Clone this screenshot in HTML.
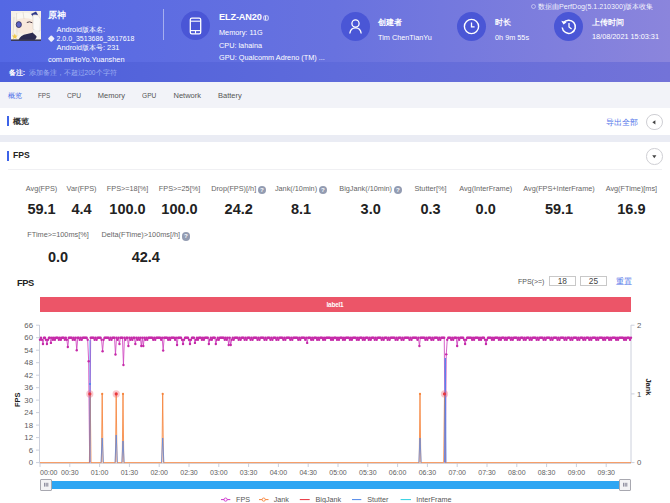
<!DOCTYPE html>
<html><head><meta charset="utf-8">
<style>
*{box-sizing:border-box}
html,body{margin:0;padding:0}
body{width:670px;height:503px;overflow:hidden;position:relative;background:#ffffff;font-family:"Liberation Sans",sans-serif;color:#333}
.a{position:absolute;white-space:nowrap}
.w{color:#fff}
.circ{position:absolute;width:29px;height:29px;border-radius:50%;background:#4a56d6}
.circ svg{position:absolute;left:0;top:0}
.lb{width:120px;text-align:center;font-size:7.3px;line-height:10px;color:#666}
.vl{width:120px;text-align:center;font-size:14.5px;line-height:18px;font-weight:bold;color:#222}
.q{display:inline-block;width:8.5px;height:8.5px;border-radius:50%;background:#939cb2;color:#fff;font-size:6.2px;line-height:8.5px;text-align:center;font-weight:bold;margin-left:1.5px;vertical-align:-1.2px}
.ylab{font-family:"Liberation Sans",sans-serif;font-size:7.8px;fill:#606060}
.xlab{font-family:"Liberation Sans",sans-serif;font-size:7px;fill:#606060}
.lg{top:494.5px;font-size:7.2px;line-height:10px;color:#555}
</style></head><body>
<!-- header -->
<div class="a" style="left:0;top:0;width:670px;height:62px;background:linear-gradient(90deg,#5468e4 0%,#6872df 50%,#8b85dc 100%)"></div>
<div class="a" style="left:0;top:62px;width:670px;height:19.5px;background:linear-gradient(90deg,#4c5fdb 0%,#5f6bdb 50%,#7373d8 100%)"></div>
<!-- avatar -->
<div class="a" style="left:11px;top:10.6px;width:30px;height:30px;overflow:hidden">
<svg width="30" height="30" viewBox="0 0 30 30">
<rect width="30" height="30" fill="#f4eee2"/>
<path d="M0 0 H30 V30 H0Z" fill="#f6f1e8"/>
<path d="M4 4 Q12 0 20 3 L22 10 Q14 6 6 10 Z" fill="#fbf8f2"/>
<path d="M5 9 Q14 5 22 9 L24 21 Q15 25 6 21 Z" fill="#f8e9dc"/>
<path d="M5.5 2 L6 24 M12 1 L13 8 M3 6 L2 26" stroke="#dcd6cc" stroke-width="0.7" fill="none"/>
<ellipse cx="7.8" cy="13.6" rx="2.6" ry="3" fill="#5b62c4" stroke="#2d2c55" stroke-width="0.8"/>
<path d="M15.8 11.5 Q18.6 10 21.4 11.8" stroke="#4a3a45" stroke-width="1" fill="none"/>
<path d="M20 3 L25 0.5 L27 4 L22 5.5Z" fill="#2f3a8a"/>
<path d="M22 4 Q28 3 29.5 8 L29 20 Q25 22 22 18 Z" fill="#fbfaf7" stroke="#cfc8c2" stroke-width="0.5"/>
<path d="M7 30 Q9 24 16 23 Q22 22 25 20 L27 23 Q25 28 23 30 Z" fill="#2b2a4f"/>
<path d="M22 19 Q27 18 29 23 L27 28 Q25 24 22 22Z" fill="#f3f1ef"/>
<path d="M3.8 22.5 L4.7 24.4 L6.7 24.6 L5.2 25.9 L5.6 27.9 L3.8 26.9 L2 27.9 L2.4 25.9 L0.9 24.6 L2.9 24.4Z" fill="#f0c94e"/>
<rect x="0" y="28.4" width="30" height="1.6" fill="#3a3a55"/>
</svg></div>
<div class="a w" style="left:48.2px;top:9.3px;font-size:8.5px;line-height:12px;font-weight:bold">原神</div>
<div class="a w" style="left:56.5px;top:25px;font-size:7.4px;line-height:10px">Android版本名:</div>
<div class="a" style="left:48.6px;top:36.1px;width:4.6px;height:4.6px;background:#eef0fa;transform:rotate(45deg);border-radius:1px"></div><div class="a w" style="left:56.5px;top:33.7px;font-size:7.0px;line-height:10px">2.0.0_3513686_3617618</div>
<div class="a w" style="left:56.5px;top:43px;font-size:7.4px;line-height:10px">Android版本号: 231</div>
<div class="a w" style="left:48px;top:54.5px;font-size:7.4px;line-height:10px">com.miHoYo.Yuanshen</div>
<div class="a" style="left:163px;top:9px;width:1px;height:31px;background:rgba(255,255,255,.45)"></div>

<!-- device -->
<div class="circ" style="left:181.2px;top:11.4px">
<svg width="29" height="29" viewBox="0 0 29 29"><rect x="9.3" y="7.2" width="10.4" height="15.6" rx="1.6" fill="none" stroke="#fff" stroke-width="1.3"/><line x1="9.3" y1="10.2" x2="19.7" y2="10.2" stroke="#fff" stroke-width="1.1"/><line x1="9.3" y1="19.6" x2="19.7" y2="19.6" stroke="#fff" stroke-width="1.1"/><line x1="14.5" y1="19.6" x2="14.5" y2="22.6" stroke="#fff" stroke-width="1.1"/></svg></div>
<div class="a w" style="left:219px;top:11.2px;font-size:9.2px;line-height:12px;font-weight:bold;letter-spacing:-0.15px">ELZ-AN20</div><div class="a" style="left:262.8px;top:14.9px;width:6px;height:6px;border-radius:50%;border:0.8px solid rgba(255,255,255,.55);background:rgba(255,255,255,.12)"></div><div class="a" style="left:265.4px;top:16.2px;width:0.9px;height:3.4px;background:rgba(255,255,255,.8)"></div>
<div class="a w" style="left:219px;top:27.5px;font-size:7.3px;line-height:10px">Memory: 11G</div>
<div class="a w" style="left:219px;top:40.5px;font-size:7.3px;line-height:10px">CPU: lahaina</div>
<div class="a w" style="left:219px;top:52.5px;font-size:7.3px;line-height:10px">GPU: Qualcomm Adreno (TM) ...</div>

<!-- creator -->
<div class="circ" style="left:340.5px;top:11.5px">
<svg width="29" height="29" viewBox="0 0 29 29"><circle cx="14.5" cy="11.5" r="3.6" fill="none" stroke="#fff" stroke-width="1.3"/><path d="M8.8 21.5 Q9.5 15.8 14.5 15.8 Q19.5 15.8 20.2 21.5" fill="none" stroke="#fff" stroke-width="1.3"/></svg></div>
<div class="a w" style="left:378px;top:16.5px;font-size:8.1px;line-height:12px;font-weight:bold">创建者</div>
<div class="a w" style="left:378px;top:32.5px;font-size:7.3px;line-height:10px">Tim ChenTianYu</div>

<!-- duration -->
<div class="circ" style="left:457px;top:11.5px">
<svg width="29" height="29" viewBox="0 0 29 29"><circle cx="14.5" cy="14.5" r="7.1" fill="none" stroke="#fff" stroke-width="1.4"/><path d="M14.5 10.5 V14.8 H17.6" fill="none" stroke="#fff" stroke-width="1.3"/></svg></div>
<div class="a w" style="left:494.8px;top:16.5px;font-size:8.1px;line-height:12px;font-weight:bold">时长</div>
<div class="a w" style="left:495px;top:33px;font-size:7.3px;line-height:10px">0h 9m 55s</div>

<!-- upload -->
<div class="circ" style="left:554px;top:11.5px">
<svg width="29" height="29" viewBox="0 0 29 29"><path d="M9.2 11.2 A6.6 6.6 0 1 1 8.2 15.5" fill="none" stroke="#fff" stroke-width="1.5"/><path d="M7.2 8.8 L9.6 12.4 L12.6 10.3 Z" fill="#fff"/><path d="M15 11 V15 L17.6 17" fill="none" stroke="#fff" stroke-width="1.3"/></svg></div>
<div class="a w" style="left:592.4px;top:17px;font-size:8.1px;line-height:12px;font-weight:bold">上传时间</div>
<div class="a w" style="left:592px;top:32px;font-size:7.3px;line-height:10px">18/08/2021 15:03:31</div>

<div class="a" style="left:530.5px;top:4.3px;width:5px;height:5px;border:0.7px solid rgba(255,255,255,.45);border-radius:50%"></div><div class="a" style="left:538px;top:2.3px;font-size:7.1px;line-height:10px;color:rgba(255,255,255,.92)">数据由PerfDog(5.1.210300)版本收集</div>

<!-- remark band -->
<div class="a w" style="left:8.8px;top:67.2px;font-size:7px;line-height:11px;font-weight:bold">备注:</div>
<div class="a" style="left:28.5px;top:66.5px;font-size:6.6px;line-height:11px;color:#9fb0f2">添加备注，不超过200个字符</div>

<!-- tabs -->
<div class="a" style="left:0;top:81.5px;width:670px;height:26px;background:#f2f3f8"></div>
<div class="a" style="left:8px;top:90.8px;font-size:6.8px;line-height:10px;color:#4a6ee8">概览</div>
<div class="a" style="left:38.4px;top:90.5px;font-size:7.5px;line-height:10px;color:#555;transform-origin:0 50%;transform:scaleX(.84)">FPS</div>
<div class="a" style="left:67px;top:90.5px;font-size:7.5px;line-height:10px;color:#555;transform-origin:0 50%;transform:scaleX(.89)">CPU</div>
<div class="a" style="left:97.8px;top:90.5px;font-size:7.5px;line-height:10px;color:#555">Memory</div>
<div class="a" style="left:142px;top:90.5px;font-size:7.5px;line-height:10px;color:#555;transform-origin:0 50%;transform:scaleX(.88)">GPU</div>
<div class="a" style="left:173.5px;top:90.5px;font-size:7.5px;line-height:10px;color:#555">Network</div>
<div class="a" style="left:218px;top:90.5px;font-size:7.5px;line-height:10px;color:#555">Battery</div>

<!-- overview section -->
<div class="a" style="left:0;top:107.5px;width:670px;height:27px;background:#fff"></div>
<div class="a" style="left:7.4px;top:115.8px;width:1.8px;height:9.8px;background:#3d63e8"></div>
<div class="a" style="left:12.5px;top:115.5px;font-size:8.2px;line-height:11px;color:#333;font-weight:bold">概览</div>
<div class="a" style="left:605.8px;top:116.6px;font-size:7.5px;line-height:11px;color:#5577ea">导出全部</div>
<div class="a" style="left:646px;top:113.5px;width:16.5px;height:16.5px;border-radius:50%;border:1px solid #cfcfd4;background:#fff"></div>
<svg class="a" style="left:646px;top:113.5px" width="17" height="17"><path d="M6.3 8.3 L9.4 6.2 V10.4 Z" fill="#444"/></svg>

<div class="a" style="left:0;top:134.5px;width:670px;height:7.5px;background:#eaecf4"></div>

<!-- FPS section -->
<div class="a" style="left:7.4px;top:151px;width:1.8px;height:10.4px;background:#3d63e8"></div>
<div class="a" style="left:13px;top:150.3px;font-size:8.6px;line-height:11px;font-weight:bold;color:#222">FPS</div>
<div class="a" style="left:646px;top:148px;width:16.5px;height:16.5px;border-radius:50%;border:1px solid #cfcfd4;background:#fff"></div>
<svg class="a" style="left:646px;top:148px" width="17" height="17"><path d="M6.2 7.2 L10.4 7.2 L8.3 10.2 Z" fill="#444"/></svg>
<div class="a" style="left:8px;top:169.3px;width:654px;height:1px;background:#f0f0f3"></div>

<!-- stats -->
<div class="a lb" style="left:-18.5px;top:183.5px">Avg(FPS)</div>
<div class="a vl" style="left:-18.5px;top:200.2px">59.1</div>
<div class="a lb" style="left:21.5px;top:183.5px">Var(FPS)</div>
<div class="a vl" style="left:21.5px;top:200.2px">4.4</div>
<div class="a lb" style="left:67.5px;top:183.5px">FPS&gt;=18[%]</div>
<div class="a vl" style="left:67.5px;top:200.2px">100.0</div>
<div class="a lb" style="left:119.5px;top:183.5px">FPS&gt;=25[%]</div>
<div class="a vl" style="left:119.5px;top:200.2px">100.0</div>
<div class="a lb" style="left:178.7px;top:183.5px">Drop(FPS)[/h]<span class="q">?</span></div>
<div class="a vl" style="left:178.7px;top:200.2px">24.2</div>
<div class="a lb" style="left:241px;top:183.5px">Jank(/10min)<span class="q">?</span></div>
<div class="a vl" style="left:241px;top:200.2px">8.1</div>
<div class="a lb" style="left:310.7px;top:183.5px">BigJank(/10min)<span class="q">?</span></div>
<div class="a vl" style="left:310.7px;top:200.2px">3.0</div>
<div class="a lb" style="left:370.5px;top:183.5px">Stutter[%]</div>
<div class="a vl" style="left:370.5px;top:200.2px">0.3</div>
<div class="a lb" style="left:425.7px;top:183.5px">Avg(InterFrame)</div>
<div class="a vl" style="left:425.7px;top:200.2px">0.0</div>
<div class="a lb" style="left:499px;top:183.5px">Avg(FPS+InterFrame)</div>
<div class="a vl" style="left:499px;top:200.2px">59.1</div>
<div class="a lb" style="left:571.4px;top:183.5px">Avg(FTime)[ms]</div>
<div class="a vl" style="left:571.4px;top:200.2px">16.9</div>
<div class="a lb" style="left:-2px;top:230.2px">FTime&gt;=100ms[%]</div>
<div class="a vl" style="left:-2px;top:247.5px">0.0</div>
<div class="a lb" style="left:85.80000000000001px;top:230.2px">Delta(FTime)&gt;100ms[/h]<span class="q">?</span></div>
<div class="a vl" style="left:85.80000000000001px;top:247.5px">42.4</div>
<!-- chart -->
<div class="a" style="left:17px;top:277.6px;font-size:9.3px;line-height:11px;font-weight:bold;color:#222;letter-spacing:-0.4px">FPS</div>
<div class="a" style="left:518px;top:276.5px;font-size:7px;line-height:10px;color:#555">FPS(&gt;=)</div>
<div class="a" style="left:549px;top:276.3px;width:26.6px;height:9.6px;border:0.8px solid #c8c8c8;font-size:8.3px;line-height:8.6px;text-align:center;color:#444">18</div>
<div class="a" style="left:580.2px;top:276.3px;width:26.4px;height:9.6px;border:0.8px solid #c8c8c8;font-size:8.3px;line-height:8.6px;text-align:center;color:#444">25</div>
<div class="a" style="left:615.5px;top:276.8px;font-size:7.5px;line-height:10px;color:#4a6ee8">重置</div>
<div class="a" style="left:39.8px;top:296.8px;width:590.9px;height:15.1px;background:#ec5568"></div>
<div class="a" style="left:300px;top:299.6px;width:70px;text-align:center;font-size:6.4px;line-height:10px;color:#fff;font-weight:bold;letter-spacing:-0.2px">label1</div>
<div class="a" style="left:10px;top:395px;width:14px;height:10px;font-size:7.5px;line-height:10px;font-weight:bold;color:#222;transform:translateX(0.5px) rotate(-90deg);text-align:center">FPS</div>
<div class="a" style="left:638px;top:382px;width:20px;height:10px;font-size:7.5px;line-height:10px;font-weight:bold;color:#222;transform:rotate(90deg);text-align:center">Jank</div>
<svg class="a" style="left:0;top:0" width="670" height="503" viewBox="0 0 670 503"><line x1="39.5" y1="325" x2="39.5" y2="463" stroke="#ccd0dc" stroke-width="1"/>
<line x1="631" y1="325" x2="631" y2="463" stroke="#ccd0dc" stroke-width="1"/>
<line x1="36" y1="462.6" x2="39.5" y2="462.6" stroke="#ccd0dc" stroke-width="1"/>
<text x="33" y="465.3" text-anchor="end" class="ylab">0</text>
<line x1="36" y1="450.1" x2="39.5" y2="450.1" stroke="#ccd0dc" stroke-width="1"/>
<text x="33" y="452.8" text-anchor="end" class="ylab">6</text>
<line x1="36" y1="437.6" x2="39.5" y2="437.6" stroke="#ccd0dc" stroke-width="1"/>
<text x="33" y="440.3" text-anchor="end" class="ylab">12</text>
<line x1="36" y1="425.1" x2="39.5" y2="425.1" stroke="#ccd0dc" stroke-width="1"/>
<text x="33" y="427.8" text-anchor="end" class="ylab">18</text>
<line x1="36" y1="412.6" x2="39.5" y2="412.6" stroke="#ccd0dc" stroke-width="1"/>
<text x="33" y="415.3" text-anchor="end" class="ylab">24</text>
<line x1="36" y1="400.1" x2="39.5" y2="400.1" stroke="#ccd0dc" stroke-width="1"/>
<text x="33" y="402.8" text-anchor="end" class="ylab">30</text>
<line x1="36" y1="387.7" x2="39.5" y2="387.7" stroke="#ccd0dc" stroke-width="1"/>
<text x="33" y="390.4" text-anchor="end" class="ylab">36</text>
<line x1="36" y1="375.2" x2="39.5" y2="375.2" stroke="#ccd0dc" stroke-width="1"/>
<text x="33" y="377.9" text-anchor="end" class="ylab">42</text>
<line x1="36" y1="362.7" x2="39.5" y2="362.7" stroke="#ccd0dc" stroke-width="1"/>
<text x="33" y="365.4" text-anchor="end" class="ylab">48</text>
<line x1="36" y1="350.2" x2="39.5" y2="350.2" stroke="#ccd0dc" stroke-width="1"/>
<text x="33" y="352.9" text-anchor="end" class="ylab">54</text>
<line x1="36" y1="337.7" x2="39.5" y2="337.7" stroke="#ccd0dc" stroke-width="1"/>
<text x="33" y="340.4" text-anchor="end" class="ylab">60</text>
<line x1="36" y1="325.2" x2="39.5" y2="325.2" stroke="#ccd0dc" stroke-width="1"/>
<text x="33" y="327.9" text-anchor="end" class="ylab">66</text>
<line x1="631" y1="462.6" x2="634.5" y2="462.6" stroke="#ccd0dc" stroke-width="1"/>
<text x="637" y="465.3" class="ylab">0</text>
<line x1="631" y1="393.9" x2="634.5" y2="393.9" stroke="#ccd0dc" stroke-width="1"/>
<text x="637" y="396.6" class="ylab">1</text>
<line x1="631" y1="325.2" x2="634.5" y2="325.2" stroke="#ccd0dc" stroke-width="1"/>
<text x="637" y="327.9" class="ylab">2</text>
<line x1="39.5" y1="463.3" x2="631" y2="463.3" stroke="#ccd0dc" stroke-width="1"/>
<line x1="40.0" y1="463" x2="40.0" y2="467" stroke="#ccd0dc" stroke-width="1"/>
<text x="40.0" y="475" class="xlab">00:00</text>
<line x1="69.8" y1="463" x2="69.8" y2="467" stroke="#ccd0dc" stroke-width="1"/>
<text x="69.8" y="475" text-anchor="middle" class="xlab">00:30</text>
<line x1="99.6" y1="463" x2="99.6" y2="467" stroke="#ccd0dc" stroke-width="1"/>
<text x="99.6" y="475" text-anchor="middle" class="xlab">01:00</text>
<line x1="129.4" y1="463" x2="129.4" y2="467" stroke="#ccd0dc" stroke-width="1"/>
<text x="129.4" y="475" text-anchor="middle" class="xlab">01:30</text>
<line x1="159.2" y1="463" x2="159.2" y2="467" stroke="#ccd0dc" stroke-width="1"/>
<text x="159.2" y="475" text-anchor="middle" class="xlab">02:00</text>
<line x1="189.0" y1="463" x2="189.0" y2="467" stroke="#ccd0dc" stroke-width="1"/>
<text x="189.0" y="475" text-anchor="middle" class="xlab">02:30</text>
<line x1="218.8" y1="463" x2="218.8" y2="467" stroke="#ccd0dc" stroke-width="1"/>
<text x="218.8" y="475" text-anchor="middle" class="xlab">03:00</text>
<line x1="248.6" y1="463" x2="248.6" y2="467" stroke="#ccd0dc" stroke-width="1"/>
<text x="248.6" y="475" text-anchor="middle" class="xlab">03:30</text>
<line x1="278.4" y1="463" x2="278.4" y2="467" stroke="#ccd0dc" stroke-width="1"/>
<text x="278.4" y="475" text-anchor="middle" class="xlab">04:00</text>
<line x1="308.2" y1="463" x2="308.2" y2="467" stroke="#ccd0dc" stroke-width="1"/>
<text x="308.2" y="475" text-anchor="middle" class="xlab">04:30</text>
<line x1="338.0" y1="463" x2="338.0" y2="467" stroke="#ccd0dc" stroke-width="1"/>
<text x="338.0" y="475" text-anchor="middle" class="xlab">05:00</text>
<line x1="367.8" y1="463" x2="367.8" y2="467" stroke="#ccd0dc" stroke-width="1"/>
<text x="367.8" y="475" text-anchor="middle" class="xlab">05:30</text>
<line x1="397.6" y1="463" x2="397.6" y2="467" stroke="#ccd0dc" stroke-width="1"/>
<text x="397.6" y="475" text-anchor="middle" class="xlab">06:00</text>
<line x1="427.4" y1="463" x2="427.4" y2="467" stroke="#ccd0dc" stroke-width="1"/>
<text x="427.4" y="475" text-anchor="middle" class="xlab">06:30</text>
<line x1="457.2" y1="463" x2="457.2" y2="467" stroke="#ccd0dc" stroke-width="1"/>
<text x="457.2" y="475" text-anchor="middle" class="xlab">07:00</text>
<line x1="487.0" y1="463" x2="487.0" y2="467" stroke="#ccd0dc" stroke-width="1"/>
<text x="487.0" y="475" text-anchor="middle" class="xlab">07:30</text>
<line x1="516.8" y1="463" x2="516.8" y2="467" stroke="#ccd0dc" stroke-width="1"/>
<text x="516.8" y="475" text-anchor="middle" class="xlab">08:00</text>
<line x1="546.6" y1="463" x2="546.6" y2="467" stroke="#ccd0dc" stroke-width="1"/>
<text x="546.6" y="475" text-anchor="middle" class="xlab">08:30</text>
<line x1="576.4" y1="463" x2="576.4" y2="467" stroke="#ccd0dc" stroke-width="1"/>
<text x="576.4" y="475" text-anchor="middle" class="xlab">09:00</text>
<line x1="606.2" y1="463" x2="606.2" y2="467" stroke="#ccd0dc" stroke-width="1"/>
<text x="606.2" y="475" text-anchor="middle" class="xlab">09:30</text>
<polyline points="40.00,339.77 40.99,337.69 41.99,339.77 42.98,343.94 43.97,337.69 44.97,337.69 45.96,339.77 46.95,343.94 47.95,339.77 48.94,337.69 49.93,337.69 50.93,342.90 51.92,337.69 52.91,339.77 53.91,337.69 54.90,339.77 55.89,337.69 56.89,337.69 57.88,337.69 58.87,339.77 59.87,337.69 60.86,339.77 61.85,337.69 62.85,337.69 63.84,337.69 64.83,339.77 65.83,337.69 66.82,339.77 67.81,347.06 68.81,337.69 69.80,337.69 70.79,337.69 71.78,337.69 72.78,339.77 73.77,337.69 74.76,339.77 75.76,337.69 76.75,350.18 77.74,337.69 78.74,337.69 79.73,339.77 80.72,337.69 81.72,339.77 82.71,337.69 83.70,337.69 84.70,337.69 85.69,337.69 86.68,337.69 87.68,339.77 88.67,361.22 89.66,462.60 90.66,337.69 91.65,337.69 92.64,337.69 93.64,337.69 94.63,339.77 95.62,337.69 96.62,339.77 97.61,337.69 98.60,337.69 99.60,337.69 100.59,337.69 101.58,339.77 102.58,351.22 103.57,339.77 104.56,337.69 105.56,337.69 106.55,337.69 107.54,337.69 108.54,337.69 109.53,339.77 110.52,337.69 111.52,339.77 112.51,337.69 113.50,337.69 114.50,337.69 115.49,354.55 116.48,337.69 117.48,339.77 118.47,337.69 119.46,343.94 120.46,337.69 121.45,337.69 122.44,337.69 123.44,364.96 124.43,337.69 125.42,339.77 126.42,337.69 127.41,337.69 128.40,346.02 129.39,337.69 130.39,339.77 131.38,337.69 132.37,339.77 133.37,337.69 134.36,337.69 135.35,343.94 136.35,337.69 137.34,339.77 138.33,337.69 139.33,339.77 140.32,337.69 141.31,346.02 142.31,337.69 143.30,346.02 144.29,337.69 145.29,339.77 146.28,337.69 147.27,339.77 148.27,337.69 149.26,337.69 150.25,337.69 151.25,337.69 152.24,337.69 153.23,339.77 154.23,337.69 155.22,339.77 156.21,337.69 157.21,337.69 158.20,337.69 159.19,337.69 160.19,337.69 161.18,339.77 162.17,337.69 163.17,350.60 164.16,337.69 165.15,337.69 166.15,337.69 167.14,337.69 168.13,339.77 169.13,337.69 170.12,339.77 171.11,337.69 172.11,337.69 173.10,337.69 174.09,337.69 175.09,339.77 176.08,337.69 177.07,344.98 178.07,337.69 179.06,337.69 180.05,337.69 181.05,337.69 182.04,339.77 183.03,343.94 184.03,339.77 185.02,337.69 186.01,337.69 187.01,337.69 188.00,337.69 188.99,339.77 189.98,343.94 190.98,339.77 191.97,337.69 192.96,337.69 193.96,337.69 194.95,342.90 195.94,339.77 196.94,337.69 197.93,339.77 198.92,337.69 199.92,337.69 200.91,337.69 201.90,339.77 202.90,337.69 203.89,339.77 204.88,337.69 205.88,337.69 206.87,337.69 207.86,337.69 208.86,343.94 209.85,339.77 210.84,337.69 211.84,339.77 212.83,337.69 213.82,337.69 214.82,337.69 215.81,343.94 216.80,339.77 217.80,337.69 218.79,339.77 219.78,337.69 220.78,337.69 221.77,337.69 222.76,337.69 223.76,337.69 224.75,339.77 225.74,337.69 226.74,339.77 227.73,337.69 228.72,344.98 229.72,337.69 230.71,344.98 231.70,339.77 232.70,337.69 233.69,339.77 234.68,337.69 235.68,337.69 236.67,337.69 237.66,337.69 238.66,339.77 239.65,337.69 240.64,339.77 241.64,337.69 242.63,337.69 243.62,337.69 244.62,339.77 245.61,337.69 246.60,339.77 247.59,337.69 248.59,337.69 249.58,337.69 250.57,339.77 251.57,337.69 252.56,339.77 253.55,337.69 254.55,337.69 255.54,337.69 256.53,337.69 257.53,339.77 258.52,337.69 259.51,339.77 260.51,337.69 261.50,337.69 262.49,337.69 263.49,337.69 264.48,339.77 265.47,337.69 266.47,339.77 267.46,337.69 268.45,337.69 269.45,337.69 270.44,339.77 271.43,337.69 272.43,339.77 273.42,337.69 274.41,337.69 275.41,337.69 276.40,339.77 277.39,337.69 278.39,339.77 279.38,337.69 280.37,337.69 281.37,337.69 282.36,337.69 283.35,339.77 284.35,337.69 285.34,339.77 286.33,337.69 287.33,337.69 288.32,337.69 289.31,337.69 290.31,339.77 291.30,337.69 292.29,339.77 293.29,337.69 294.28,337.69 295.27,337.69 296.27,337.69 297.26,337.69 298.25,339.77 299.25,337.69 300.24,339.77 301.23,337.69 302.23,337.69 303.22,337.69 304.21,337.69 305.21,339.77 306.20,337.69 307.19,342.90 308.18,337.69 309.18,337.69 310.17,337.69 311.16,339.77 312.16,337.69 313.15,339.77 314.14,337.69 315.14,337.69 316.13,337.69 317.12,339.77 318.12,337.69 319.11,339.77 320.10,337.69 321.10,337.69 322.09,337.69 323.08,339.77 324.08,337.69 325.07,339.77 326.06,337.69 327.06,337.69 328.05,337.69 329.04,337.69 330.04,337.69 331.03,339.77 332.02,337.69 333.02,339.77 334.01,337.69 335.00,337.69 336.00,337.69 336.99,339.77 337.98,337.69 338.98,339.77 339.97,337.69 340.96,337.69 341.96,337.69 342.95,339.77 343.94,337.69 344.94,339.77 345.93,337.69 346.92,337.69 347.92,337.69 348.91,337.69 349.90,339.77 350.90,337.69 351.89,339.77 352.88,337.69 353.88,337.69 354.87,337.69 355.86,337.69 356.86,339.77 357.85,337.69 358.84,339.77 359.84,337.69 360.83,337.69 361.82,337.69 362.82,339.77 363.81,337.69 364.80,339.77 365.79,337.69 366.79,337.69 367.78,337.69 368.77,339.77 369.77,337.69 370.76,339.77 371.75,337.69 372.75,337.69 373.74,337.69 374.73,339.77 375.73,337.69 376.72,339.77 377.71,337.69 378.71,337.69 379.70,337.69 380.69,337.69 381.69,339.77 382.68,337.69 383.67,339.77 384.67,337.69 385.66,337.69 386.65,337.69 387.65,339.77 388.64,337.69 389.63,339.77 390.63,337.69 391.62,337.69 392.61,337.69 393.61,337.69 394.60,337.69 395.59,339.77 396.59,337.69 397.58,339.77 398.57,337.69 399.57,337.69 400.56,337.69 401.55,339.77 402.55,337.69 403.54,339.77 404.53,337.69 405.53,337.69 406.52,337.69 407.51,337.69 408.51,337.69 409.50,339.77 410.49,337.69 411.49,339.77 412.48,337.69 413.47,337.69 414.47,337.69 415.46,337.69 416.45,337.69 417.45,339.77 418.44,337.69 419.43,346.02 420.43,337.69 421.42,337.69 422.41,337.69 423.41,337.69 424.40,337.69 425.39,339.77 426.38,337.69 427.38,339.77 428.37,337.69 429.36,337.69 430.36,337.69 431.35,339.77 432.34,337.69 433.34,339.77 434.33,337.69 435.32,337.69 436.32,337.69 437.31,337.69 438.30,339.77 439.30,337.69 440.29,339.77 441.28,337.69 442.28,337.69 443.27,337.69 444.26,337.69 445.26,462.60 446.25,354.35 447.24,339.77 448.24,337.69 449.23,337.69 450.22,337.69 451.22,339.77 452.21,337.69 453.20,339.77 454.20,337.69 455.19,337.69 456.18,337.69 457.18,346.02 458.17,337.69 459.16,339.77 460.16,337.69 461.15,337.69 462.14,337.69 463.14,337.69 464.13,339.77 465.12,343.94 466.12,339.77 467.11,337.69 468.10,337.69 469.10,337.69 470.09,337.69 471.08,337.69 472.08,339.77 473.07,337.69 474.06,339.77 475.06,337.69 476.05,337.69 477.04,337.69 478.04,337.69 479.03,339.77 480.02,337.69 481.02,339.77 482.01,337.69 483.00,337.69 483.99,337.69 484.99,339.77 485.98,343.94 486.97,339.77 487.97,337.69 488.96,337.69 489.95,337.69 490.95,337.69 491.94,339.77 492.93,337.69 493.93,339.77 494.92,337.69 495.91,337.69 496.91,337.69 497.90,337.69 498.89,339.77 499.89,337.69 500.88,339.77 501.87,337.69 502.87,337.69 503.86,337.69 504.85,339.77 505.85,337.69 506.84,339.77 507.83,337.69 508.83,337.69 509.82,337.69 510.81,339.77 511.81,337.69 512.80,339.77 513.79,337.69 514.79,337.69 515.78,337.69 516.77,337.69 517.77,339.77 518.76,337.69 519.75,339.77 520.75,337.69 521.74,337.69 522.73,337.69 523.73,339.77 524.72,337.69 525.71,339.77 526.71,337.69 527.70,337.69 528.69,337.69 529.69,339.77 530.68,337.69 531.67,339.77 532.67,337.69 533.66,337.69 534.65,337.69 535.65,337.69 536.64,339.77 537.63,337.69 538.63,339.77 539.62,337.69 540.61,337.69 541.61,337.69 542.60,337.69 543.59,339.77 544.58,337.69 545.58,339.77 546.57,337.69 547.56,337.69 548.56,337.69 549.55,337.69 550.54,339.77 551.54,337.69 552.53,339.77 553.52,337.69 554.52,337.69 555.51,337.69 556.50,337.69 557.50,339.77 558.49,337.69 559.48,339.77 560.48,337.69 561.47,337.69 562.46,337.69 563.46,337.69 564.45,339.77 565.44,337.69 566.44,339.77 567.43,337.69 568.42,337.69 569.42,337.69 570.41,339.77 571.40,337.69 572.40,339.77 573.39,337.69 574.38,337.69 575.38,337.69 576.37,337.69 577.36,339.77 578.36,337.69 579.35,339.77 580.34,337.69 581.34,337.69 582.33,337.69 583.32,339.77 584.32,337.69 585.31,339.77 586.30,337.69 587.30,337.69 588.29,337.69 589.28,339.77 590.28,337.69 591.27,339.77 592.26,337.69 593.26,337.69 594.25,337.69 595.24,337.69 596.24,339.77 597.23,337.69 598.22,339.77 599.22,337.69 600.21,337.69 601.20,337.69 602.19,337.69 603.19,339.77 604.18,337.69 605.17,339.77 606.17,337.69 607.16,337.69 608.15,337.69 609.15,339.77 610.14,337.69 611.13,339.77 612.13,337.69 613.12,337.69 614.11,337.69 615.11,337.69 616.10,339.77 617.09,337.69 618.09,339.77 619.08,337.69 620.07,337.69 621.07,337.69 622.06,337.69 623.05,337.69 624.05,339.77 625.04,337.69 626.03,339.77 627.03,337.69 628.02,337.69 629.01,337.69 630.01,339.77 631.00,337.69" fill="none" stroke="#cf45c0" stroke-width="1" stroke-opacity="0.85"/>
<polyline points="40.0,462.6 89.40,462.6 90.20,393.90 91.00,462.6 101.40,462.6 102.20,393.90 103.00,462.6 115.40,462.6 116.20,393.90 117.00,462.6 122.20,462.6 123.00,393.90 123.80,462.6 161.90,462.6 162.70,393.90 163.50,462.6 419.20,462.6 420.00,393.90 420.80,462.6 443.70,462.6 444.50,393.90 445.30,462.6 631.0,462.6" fill="none" stroke="#f5843c" stroke-width="0.85"/>
<circle cx="90.20" cy="393.90" r="1.1" fill="#f5843c"/>
<circle cx="102.20" cy="393.90" r="1.1" fill="#f5843c"/>
<circle cx="116.20" cy="393.90" r="1.1" fill="#f5843c"/>
<circle cx="123.00" cy="393.90" r="1.1" fill="#f5843c"/>
<circle cx="162.70" cy="393.90" r="1.1" fill="#f5843c"/>
<circle cx="420.00" cy="393.90" r="1.1" fill="#f5843c"/>
<circle cx="444.50" cy="393.90" r="1.1" fill="#f5843c"/>
<path d="M101.00 462.6 L102.20 438 L103.40 462.6" fill="none" stroke="#4a86ee" stroke-width="0.9" opacity="0.8"/>
<path d="M115.00 462.6 L116.20 435 L117.40 462.6" fill="none" stroke="#4a86ee" stroke-width="0.9" opacity="0.8"/>
<path d="M121.80 462.6 L123.00 441 L124.20 462.6" fill="none" stroke="#4a86ee" stroke-width="0.9" opacity="0.8"/>
<path d="M161.50 462.6 L162.70 438 L163.90 462.6" fill="none" stroke="#4a86ee" stroke-width="0.9" opacity="0.8"/>
<path d="M418.80 462.6 L420.00 438 L421.20 462.6" fill="none" stroke="#4a86ee" stroke-width="0.9" opacity="0.8"/>
<line x1="90" y1="340" x2="90" y2="462.6" stroke="#4a86ee" stroke-width="0.9"/>
<circle cx="90" cy="384" r="1" fill="#4a86ee"/>
<path d="M444.6 462.6 L445.3 358 L446 462.6" fill="none" stroke="#4a86ee" stroke-width="0.9"/>
<circle cx="40.00" cy="339.77" r="1.2" fill="#c52aa8"/>
<circle cx="40.99" cy="337.69" r="1.2" fill="#c52aa8"/>
<circle cx="41.99" cy="339.77" r="1.2" fill="#c52aa8"/>
<circle cx="42.98" cy="343.94" r="1.2" fill="#c52aa8"/>
<circle cx="43.97" cy="337.69" r="1.2" fill="#c52aa8"/>
<circle cx="44.97" cy="337.69" r="1.2" fill="#c52aa8"/>
<circle cx="45.96" cy="339.77" r="1.2" fill="#c52aa8"/>
<circle cx="46.95" cy="343.94" r="1.2" fill="#c52aa8"/>
<circle cx="47.95" cy="339.77" r="1.2" fill="#c52aa8"/>
<circle cx="48.94" cy="337.69" r="1.2" fill="#c52aa8"/>
<circle cx="49.93" cy="337.69" r="1.2" fill="#c52aa8"/>
<circle cx="50.93" cy="342.90" r="1.2" fill="#c52aa8"/>
<circle cx="51.92" cy="337.69" r="1.2" fill="#c52aa8"/>
<circle cx="52.91" cy="339.77" r="1.2" fill="#c52aa8"/>
<circle cx="53.91" cy="337.69" r="1.2" fill="#c52aa8"/>
<circle cx="54.90" cy="339.77" r="1.2" fill="#c52aa8"/>
<circle cx="55.89" cy="337.69" r="1.2" fill="#c52aa8"/>
<circle cx="56.89" cy="337.69" r="1.2" fill="#c52aa8"/>
<circle cx="57.88" cy="337.69" r="1.2" fill="#c52aa8"/>
<circle cx="58.87" cy="339.77" r="1.2" fill="#c52aa8"/>
<circle cx="59.87" cy="337.69" r="1.2" fill="#c52aa8"/>
<circle cx="60.86" cy="339.77" r="1.2" fill="#c52aa8"/>
<circle cx="61.85" cy="337.69" r="1.2" fill="#c52aa8"/>
<circle cx="62.85" cy="337.69" r="1.2" fill="#c52aa8"/>
<circle cx="63.84" cy="337.69" r="1.2" fill="#c52aa8"/>
<circle cx="64.83" cy="339.77" r="1.2" fill="#c52aa8"/>
<circle cx="65.83" cy="337.69" r="1.2" fill="#c52aa8"/>
<circle cx="66.82" cy="339.77" r="1.2" fill="#c52aa8"/>
<circle cx="67.81" cy="347.06" r="1.2" fill="#c52aa8"/>
<circle cx="68.81" cy="337.69" r="1.2" fill="#c52aa8"/>
<circle cx="69.80" cy="337.69" r="1.2" fill="#c52aa8"/>
<circle cx="70.79" cy="337.69" r="1.2" fill="#c52aa8"/>
<circle cx="71.78" cy="337.69" r="1.2" fill="#c52aa8"/>
<circle cx="72.78" cy="339.77" r="1.2" fill="#c52aa8"/>
<circle cx="73.77" cy="337.69" r="1.2" fill="#c52aa8"/>
<circle cx="74.76" cy="339.77" r="1.2" fill="#c52aa8"/>
<circle cx="75.76" cy="337.69" r="1.2" fill="#c52aa8"/>
<circle cx="76.75" cy="350.18" r="1.2" fill="#c52aa8"/>
<circle cx="77.74" cy="337.69" r="1.2" fill="#c52aa8"/>
<circle cx="78.74" cy="337.69" r="1.2" fill="#c52aa8"/>
<circle cx="79.73" cy="339.77" r="1.2" fill="#c52aa8"/>
<circle cx="80.72" cy="337.69" r="1.2" fill="#c52aa8"/>
<circle cx="81.72" cy="339.77" r="1.2" fill="#c52aa8"/>
<circle cx="82.71" cy="337.69" r="1.2" fill="#c52aa8"/>
<circle cx="83.70" cy="337.69" r="1.2" fill="#c52aa8"/>
<circle cx="84.70" cy="337.69" r="1.2" fill="#c52aa8"/>
<circle cx="85.69" cy="337.69" r="1.2" fill="#c52aa8"/>
<circle cx="86.68" cy="337.69" r="1.2" fill="#c52aa8"/>
<circle cx="87.68" cy="339.77" r="1.2" fill="#c52aa8"/>
<circle cx="88.67" cy="361.22" r="1.2" fill="#c52aa8"/>
<circle cx="90.66" cy="337.69" r="1.2" fill="#c52aa8"/>
<circle cx="91.65" cy="337.69" r="1.2" fill="#c52aa8"/>
<circle cx="92.64" cy="337.69" r="1.2" fill="#c52aa8"/>
<circle cx="93.64" cy="337.69" r="1.2" fill="#c52aa8"/>
<circle cx="94.63" cy="339.77" r="1.2" fill="#c52aa8"/>
<circle cx="95.62" cy="337.69" r="1.2" fill="#c52aa8"/>
<circle cx="96.62" cy="339.77" r="1.2" fill="#c52aa8"/>
<circle cx="97.61" cy="337.69" r="1.2" fill="#c52aa8"/>
<circle cx="98.60" cy="337.69" r="1.2" fill="#c52aa8"/>
<circle cx="99.60" cy="337.69" r="1.2" fill="#c52aa8"/>
<circle cx="100.59" cy="337.69" r="1.2" fill="#c52aa8"/>
<circle cx="101.58" cy="339.77" r="1.2" fill="#c52aa8"/>
<circle cx="102.58" cy="351.22" r="1.2" fill="#c52aa8"/>
<circle cx="103.57" cy="339.77" r="1.2" fill="#c52aa8"/>
<circle cx="104.56" cy="337.69" r="1.2" fill="#c52aa8"/>
<circle cx="105.56" cy="337.69" r="1.2" fill="#c52aa8"/>
<circle cx="106.55" cy="337.69" r="1.2" fill="#c52aa8"/>
<circle cx="107.54" cy="337.69" r="1.2" fill="#c52aa8"/>
<circle cx="108.54" cy="337.69" r="1.2" fill="#c52aa8"/>
<circle cx="109.53" cy="339.77" r="1.2" fill="#c52aa8"/>
<circle cx="110.52" cy="337.69" r="1.2" fill="#c52aa8"/>
<circle cx="111.52" cy="339.77" r="1.2" fill="#c52aa8"/>
<circle cx="112.51" cy="337.69" r="1.2" fill="#c52aa8"/>
<circle cx="113.50" cy="337.69" r="1.2" fill="#c52aa8"/>
<circle cx="114.50" cy="337.69" r="1.2" fill="#c52aa8"/>
<circle cx="115.49" cy="354.55" r="1.2" fill="#c52aa8"/>
<circle cx="116.48" cy="337.69" r="1.2" fill="#c52aa8"/>
<circle cx="117.48" cy="339.77" r="1.2" fill="#c52aa8"/>
<circle cx="118.47" cy="337.69" r="1.2" fill="#c52aa8"/>
<circle cx="119.46" cy="343.94" r="1.2" fill="#c52aa8"/>
<circle cx="120.46" cy="337.69" r="1.2" fill="#c52aa8"/>
<circle cx="121.45" cy="337.69" r="1.2" fill="#c52aa8"/>
<circle cx="122.44" cy="337.69" r="1.2" fill="#c52aa8"/>
<circle cx="123.44" cy="364.96" r="1.2" fill="#c52aa8"/>
<circle cx="124.43" cy="337.69" r="1.2" fill="#c52aa8"/>
<circle cx="125.42" cy="339.77" r="1.2" fill="#c52aa8"/>
<circle cx="126.42" cy="337.69" r="1.2" fill="#c52aa8"/>
<circle cx="127.41" cy="337.69" r="1.2" fill="#c52aa8"/>
<circle cx="128.40" cy="346.02" r="1.2" fill="#c52aa8"/>
<circle cx="129.39" cy="337.69" r="1.2" fill="#c52aa8"/>
<circle cx="130.39" cy="339.77" r="1.2" fill="#c52aa8"/>
<circle cx="131.38" cy="337.69" r="1.2" fill="#c52aa8"/>
<circle cx="132.37" cy="339.77" r="1.2" fill="#c52aa8"/>
<circle cx="133.37" cy="337.69" r="1.2" fill="#c52aa8"/>
<circle cx="134.36" cy="337.69" r="1.2" fill="#c52aa8"/>
<circle cx="135.35" cy="343.94" r="1.2" fill="#c52aa8"/>
<circle cx="136.35" cy="337.69" r="1.2" fill="#c52aa8"/>
<circle cx="137.34" cy="339.77" r="1.2" fill="#c52aa8"/>
<circle cx="138.33" cy="337.69" r="1.2" fill="#c52aa8"/>
<circle cx="139.33" cy="339.77" r="1.2" fill="#c52aa8"/>
<circle cx="140.32" cy="337.69" r="1.2" fill="#c52aa8"/>
<circle cx="141.31" cy="346.02" r="1.2" fill="#c52aa8"/>
<circle cx="142.31" cy="337.69" r="1.2" fill="#c52aa8"/>
<circle cx="143.30" cy="346.02" r="1.2" fill="#c52aa8"/>
<circle cx="144.29" cy="337.69" r="1.2" fill="#c52aa8"/>
<circle cx="145.29" cy="339.77" r="1.2" fill="#c52aa8"/>
<circle cx="146.28" cy="337.69" r="1.2" fill="#c52aa8"/>
<circle cx="147.27" cy="339.77" r="1.2" fill="#c52aa8"/>
<circle cx="148.27" cy="337.69" r="1.2" fill="#c52aa8"/>
<circle cx="149.26" cy="337.69" r="1.2" fill="#c52aa8"/>
<circle cx="150.25" cy="337.69" r="1.2" fill="#c52aa8"/>
<circle cx="151.25" cy="337.69" r="1.2" fill="#c52aa8"/>
<circle cx="152.24" cy="337.69" r="1.2" fill="#c52aa8"/>
<circle cx="153.23" cy="339.77" r="1.2" fill="#c52aa8"/>
<circle cx="154.23" cy="337.69" r="1.2" fill="#c52aa8"/>
<circle cx="155.22" cy="339.77" r="1.2" fill="#c52aa8"/>
<circle cx="156.21" cy="337.69" r="1.2" fill="#c52aa8"/>
<circle cx="157.21" cy="337.69" r="1.2" fill="#c52aa8"/>
<circle cx="158.20" cy="337.69" r="1.2" fill="#c52aa8"/>
<circle cx="159.19" cy="337.69" r="1.2" fill="#c52aa8"/>
<circle cx="160.19" cy="337.69" r="1.2" fill="#c52aa8"/>
<circle cx="161.18" cy="339.77" r="1.2" fill="#c52aa8"/>
<circle cx="162.17" cy="337.69" r="1.2" fill="#c52aa8"/>
<circle cx="163.17" cy="350.60" r="1.2" fill="#c52aa8"/>
<circle cx="164.16" cy="337.69" r="1.2" fill="#c52aa8"/>
<circle cx="165.15" cy="337.69" r="1.2" fill="#c52aa8"/>
<circle cx="166.15" cy="337.69" r="1.2" fill="#c52aa8"/>
<circle cx="167.14" cy="337.69" r="1.2" fill="#c52aa8"/>
<circle cx="168.13" cy="339.77" r="1.2" fill="#c52aa8"/>
<circle cx="169.13" cy="337.69" r="1.2" fill="#c52aa8"/>
<circle cx="170.12" cy="339.77" r="1.2" fill="#c52aa8"/>
<circle cx="171.11" cy="337.69" r="1.2" fill="#c52aa8"/>
<circle cx="172.11" cy="337.69" r="1.2" fill="#c52aa8"/>
<circle cx="173.10" cy="337.69" r="1.2" fill="#c52aa8"/>
<circle cx="174.09" cy="337.69" r="1.2" fill="#c52aa8"/>
<circle cx="175.09" cy="339.77" r="1.2" fill="#c52aa8"/>
<circle cx="176.08" cy="337.69" r="1.2" fill="#c52aa8"/>
<circle cx="177.07" cy="344.98" r="1.2" fill="#c52aa8"/>
<circle cx="178.07" cy="337.69" r="1.2" fill="#c52aa8"/>
<circle cx="179.06" cy="337.69" r="1.2" fill="#c52aa8"/>
<circle cx="180.05" cy="337.69" r="1.2" fill="#c52aa8"/>
<circle cx="181.05" cy="337.69" r="1.2" fill="#c52aa8"/>
<circle cx="182.04" cy="339.77" r="1.2" fill="#c52aa8"/>
<circle cx="183.03" cy="343.94" r="1.2" fill="#c52aa8"/>
<circle cx="184.03" cy="339.77" r="1.2" fill="#c52aa8"/>
<circle cx="185.02" cy="337.69" r="1.2" fill="#c52aa8"/>
<circle cx="186.01" cy="337.69" r="1.2" fill="#c52aa8"/>
<circle cx="187.01" cy="337.69" r="1.2" fill="#c52aa8"/>
<circle cx="188.00" cy="337.69" r="1.2" fill="#c52aa8"/>
<circle cx="188.99" cy="339.77" r="1.2" fill="#c52aa8"/>
<circle cx="189.98" cy="343.94" r="1.2" fill="#c52aa8"/>
<circle cx="190.98" cy="339.77" r="1.2" fill="#c52aa8"/>
<circle cx="191.97" cy="337.69" r="1.2" fill="#c52aa8"/>
<circle cx="192.96" cy="337.69" r="1.2" fill="#c52aa8"/>
<circle cx="193.96" cy="337.69" r="1.2" fill="#c52aa8"/>
<circle cx="194.95" cy="342.90" r="1.2" fill="#c52aa8"/>
<circle cx="195.94" cy="339.77" r="1.2" fill="#c52aa8"/>
<circle cx="196.94" cy="337.69" r="1.2" fill="#c52aa8"/>
<circle cx="197.93" cy="339.77" r="1.2" fill="#c52aa8"/>
<circle cx="198.92" cy="337.69" r="1.2" fill="#c52aa8"/>
<circle cx="199.92" cy="337.69" r="1.2" fill="#c52aa8"/>
<circle cx="200.91" cy="337.69" r="1.2" fill="#c52aa8"/>
<circle cx="201.90" cy="339.77" r="1.2" fill="#c52aa8"/>
<circle cx="202.90" cy="337.69" r="1.2" fill="#c52aa8"/>
<circle cx="203.89" cy="339.77" r="1.2" fill="#c52aa8"/>
<circle cx="204.88" cy="337.69" r="1.2" fill="#c52aa8"/>
<circle cx="205.88" cy="337.69" r="1.2" fill="#c52aa8"/>
<circle cx="206.87" cy="337.69" r="1.2" fill="#c52aa8"/>
<circle cx="207.86" cy="337.69" r="1.2" fill="#c52aa8"/>
<circle cx="208.86" cy="343.94" r="1.2" fill="#c52aa8"/>
<circle cx="209.85" cy="339.77" r="1.2" fill="#c52aa8"/>
<circle cx="210.84" cy="337.69" r="1.2" fill="#c52aa8"/>
<circle cx="211.84" cy="339.77" r="1.2" fill="#c52aa8"/>
<circle cx="212.83" cy="337.69" r="1.2" fill="#c52aa8"/>
<circle cx="213.82" cy="337.69" r="1.2" fill="#c52aa8"/>
<circle cx="214.82" cy="337.69" r="1.2" fill="#c52aa8"/>
<circle cx="215.81" cy="343.94" r="1.2" fill="#c52aa8"/>
<circle cx="216.80" cy="339.77" r="1.2" fill="#c52aa8"/>
<circle cx="217.80" cy="337.69" r="1.2" fill="#c52aa8"/>
<circle cx="218.79" cy="339.77" r="1.2" fill="#c52aa8"/>
<circle cx="219.78" cy="337.69" r="1.2" fill="#c52aa8"/>
<circle cx="220.78" cy="337.69" r="1.2" fill="#c52aa8"/>
<circle cx="221.77" cy="337.69" r="1.2" fill="#c52aa8"/>
<circle cx="222.76" cy="337.69" r="1.2" fill="#c52aa8"/>
<circle cx="223.76" cy="337.69" r="1.2" fill="#c52aa8"/>
<circle cx="224.75" cy="339.77" r="1.2" fill="#c52aa8"/>
<circle cx="225.74" cy="337.69" r="1.2" fill="#c52aa8"/>
<circle cx="226.74" cy="339.77" r="1.2" fill="#c52aa8"/>
<circle cx="227.73" cy="337.69" r="1.2" fill="#c52aa8"/>
<circle cx="228.72" cy="344.98" r="1.2" fill="#c52aa8"/>
<circle cx="229.72" cy="337.69" r="1.2" fill="#c52aa8"/>
<circle cx="230.71" cy="344.98" r="1.2" fill="#c52aa8"/>
<circle cx="231.70" cy="339.77" r="1.2" fill="#c52aa8"/>
<circle cx="232.70" cy="337.69" r="1.2" fill="#c52aa8"/>
<circle cx="233.69" cy="339.77" r="1.2" fill="#c52aa8"/>
<circle cx="234.68" cy="337.69" r="1.2" fill="#c52aa8"/>
<circle cx="235.68" cy="337.69" r="1.2" fill="#c52aa8"/>
<circle cx="236.67" cy="337.69" r="1.2" fill="#c52aa8"/>
<circle cx="237.66" cy="337.69" r="1.2" fill="#c52aa8"/>
<circle cx="238.66" cy="339.77" r="1.2" fill="#c52aa8"/>
<circle cx="239.65" cy="337.69" r="1.2" fill="#c52aa8"/>
<circle cx="240.64" cy="339.77" r="1.2" fill="#c52aa8"/>
<circle cx="241.64" cy="337.69" r="1.2" fill="#c52aa8"/>
<circle cx="242.63" cy="337.69" r="1.2" fill="#c52aa8"/>
<circle cx="243.62" cy="337.69" r="1.2" fill="#c52aa8"/>
<circle cx="244.62" cy="339.77" r="1.2" fill="#c52aa8"/>
<circle cx="245.61" cy="337.69" r="1.2" fill="#c52aa8"/>
<circle cx="246.60" cy="339.77" r="1.2" fill="#c52aa8"/>
<circle cx="247.59" cy="337.69" r="1.2" fill="#c52aa8"/>
<circle cx="248.59" cy="337.69" r="1.2" fill="#c52aa8"/>
<circle cx="249.58" cy="337.69" r="1.2" fill="#c52aa8"/>
<circle cx="250.57" cy="339.77" r="1.2" fill="#c52aa8"/>
<circle cx="251.57" cy="337.69" r="1.2" fill="#c52aa8"/>
<circle cx="252.56" cy="339.77" r="1.2" fill="#c52aa8"/>
<circle cx="253.55" cy="337.69" r="1.2" fill="#c52aa8"/>
<circle cx="254.55" cy="337.69" r="1.2" fill="#c52aa8"/>
<circle cx="255.54" cy="337.69" r="1.2" fill="#c52aa8"/>
<circle cx="256.53" cy="337.69" r="1.2" fill="#c52aa8"/>
<circle cx="257.53" cy="339.77" r="1.2" fill="#c52aa8"/>
<circle cx="258.52" cy="337.69" r="1.2" fill="#c52aa8"/>
<circle cx="259.51" cy="339.77" r="1.2" fill="#c52aa8"/>
<circle cx="260.51" cy="337.69" r="1.2" fill="#c52aa8"/>
<circle cx="261.50" cy="337.69" r="1.2" fill="#c52aa8"/>
<circle cx="262.49" cy="337.69" r="1.2" fill="#c52aa8"/>
<circle cx="263.49" cy="337.69" r="1.2" fill="#c52aa8"/>
<circle cx="264.48" cy="339.77" r="1.2" fill="#c52aa8"/>
<circle cx="265.47" cy="337.69" r="1.2" fill="#c52aa8"/>
<circle cx="266.47" cy="339.77" r="1.2" fill="#c52aa8"/>
<circle cx="267.46" cy="337.69" r="1.2" fill="#c52aa8"/>
<circle cx="268.45" cy="337.69" r="1.2" fill="#c52aa8"/>
<circle cx="269.45" cy="337.69" r="1.2" fill="#c52aa8"/>
<circle cx="270.44" cy="339.77" r="1.2" fill="#c52aa8"/>
<circle cx="271.43" cy="337.69" r="1.2" fill="#c52aa8"/>
<circle cx="272.43" cy="339.77" r="1.2" fill="#c52aa8"/>
<circle cx="273.42" cy="337.69" r="1.2" fill="#c52aa8"/>
<circle cx="274.41" cy="337.69" r="1.2" fill="#c52aa8"/>
<circle cx="275.41" cy="337.69" r="1.2" fill="#c52aa8"/>
<circle cx="276.40" cy="339.77" r="1.2" fill="#c52aa8"/>
<circle cx="277.39" cy="337.69" r="1.2" fill="#c52aa8"/>
<circle cx="278.39" cy="339.77" r="1.2" fill="#c52aa8"/>
<circle cx="279.38" cy="337.69" r="1.2" fill="#c52aa8"/>
<circle cx="280.37" cy="337.69" r="1.2" fill="#c52aa8"/>
<circle cx="281.37" cy="337.69" r="1.2" fill="#c52aa8"/>
<circle cx="282.36" cy="337.69" r="1.2" fill="#c52aa8"/>
<circle cx="283.35" cy="339.77" r="1.2" fill="#c52aa8"/>
<circle cx="284.35" cy="337.69" r="1.2" fill="#c52aa8"/>
<circle cx="285.34" cy="339.77" r="1.2" fill="#c52aa8"/>
<circle cx="286.33" cy="337.69" r="1.2" fill="#c52aa8"/>
<circle cx="287.33" cy="337.69" r="1.2" fill="#c52aa8"/>
<circle cx="288.32" cy="337.69" r="1.2" fill="#c52aa8"/>
<circle cx="289.31" cy="337.69" r="1.2" fill="#c52aa8"/>
<circle cx="290.31" cy="339.77" r="1.2" fill="#c52aa8"/>
<circle cx="291.30" cy="337.69" r="1.2" fill="#c52aa8"/>
<circle cx="292.29" cy="339.77" r="1.2" fill="#c52aa8"/>
<circle cx="293.29" cy="337.69" r="1.2" fill="#c52aa8"/>
<circle cx="294.28" cy="337.69" r="1.2" fill="#c52aa8"/>
<circle cx="295.27" cy="337.69" r="1.2" fill="#c52aa8"/>
<circle cx="296.27" cy="337.69" r="1.2" fill="#c52aa8"/>
<circle cx="297.26" cy="337.69" r="1.2" fill="#c52aa8"/>
<circle cx="298.25" cy="339.77" r="1.2" fill="#c52aa8"/>
<circle cx="299.25" cy="337.69" r="1.2" fill="#c52aa8"/>
<circle cx="300.24" cy="339.77" r="1.2" fill="#c52aa8"/>
<circle cx="301.23" cy="337.69" r="1.2" fill="#c52aa8"/>
<circle cx="302.23" cy="337.69" r="1.2" fill="#c52aa8"/>
<circle cx="303.22" cy="337.69" r="1.2" fill="#c52aa8"/>
<circle cx="304.21" cy="337.69" r="1.2" fill="#c52aa8"/>
<circle cx="305.21" cy="339.77" r="1.2" fill="#c52aa8"/>
<circle cx="306.20" cy="337.69" r="1.2" fill="#c52aa8"/>
<circle cx="307.19" cy="342.90" r="1.2" fill="#c52aa8"/>
<circle cx="308.18" cy="337.69" r="1.2" fill="#c52aa8"/>
<circle cx="309.18" cy="337.69" r="1.2" fill="#c52aa8"/>
<circle cx="310.17" cy="337.69" r="1.2" fill="#c52aa8"/>
<circle cx="311.16" cy="339.77" r="1.2" fill="#c52aa8"/>
<circle cx="312.16" cy="337.69" r="1.2" fill="#c52aa8"/>
<circle cx="313.15" cy="339.77" r="1.2" fill="#c52aa8"/>
<circle cx="314.14" cy="337.69" r="1.2" fill="#c52aa8"/>
<circle cx="315.14" cy="337.69" r="1.2" fill="#c52aa8"/>
<circle cx="316.13" cy="337.69" r="1.2" fill="#c52aa8"/>
<circle cx="317.12" cy="339.77" r="1.2" fill="#c52aa8"/>
<circle cx="318.12" cy="337.69" r="1.2" fill="#c52aa8"/>
<circle cx="319.11" cy="339.77" r="1.2" fill="#c52aa8"/>
<circle cx="320.10" cy="337.69" r="1.2" fill="#c52aa8"/>
<circle cx="321.10" cy="337.69" r="1.2" fill="#c52aa8"/>
<circle cx="322.09" cy="337.69" r="1.2" fill="#c52aa8"/>
<circle cx="323.08" cy="339.77" r="1.2" fill="#c52aa8"/>
<circle cx="324.08" cy="337.69" r="1.2" fill="#c52aa8"/>
<circle cx="325.07" cy="339.77" r="1.2" fill="#c52aa8"/>
<circle cx="326.06" cy="337.69" r="1.2" fill="#c52aa8"/>
<circle cx="327.06" cy="337.69" r="1.2" fill="#c52aa8"/>
<circle cx="328.05" cy="337.69" r="1.2" fill="#c52aa8"/>
<circle cx="329.04" cy="337.69" r="1.2" fill="#c52aa8"/>
<circle cx="330.04" cy="337.69" r="1.2" fill="#c52aa8"/>
<circle cx="331.03" cy="339.77" r="1.2" fill="#c52aa8"/>
<circle cx="332.02" cy="337.69" r="1.2" fill="#c52aa8"/>
<circle cx="333.02" cy="339.77" r="1.2" fill="#c52aa8"/>
<circle cx="334.01" cy="337.69" r="1.2" fill="#c52aa8"/>
<circle cx="335.00" cy="337.69" r="1.2" fill="#c52aa8"/>
<circle cx="336.00" cy="337.69" r="1.2" fill="#c52aa8"/>
<circle cx="336.99" cy="339.77" r="1.2" fill="#c52aa8"/>
<circle cx="337.98" cy="337.69" r="1.2" fill="#c52aa8"/>
<circle cx="338.98" cy="339.77" r="1.2" fill="#c52aa8"/>
<circle cx="339.97" cy="337.69" r="1.2" fill="#c52aa8"/>
<circle cx="340.96" cy="337.69" r="1.2" fill="#c52aa8"/>
<circle cx="341.96" cy="337.69" r="1.2" fill="#c52aa8"/>
<circle cx="342.95" cy="339.77" r="1.2" fill="#c52aa8"/>
<circle cx="343.94" cy="337.69" r="1.2" fill="#c52aa8"/>
<circle cx="344.94" cy="339.77" r="1.2" fill="#c52aa8"/>
<circle cx="345.93" cy="337.69" r="1.2" fill="#c52aa8"/>
<circle cx="346.92" cy="337.69" r="1.2" fill="#c52aa8"/>
<circle cx="347.92" cy="337.69" r="1.2" fill="#c52aa8"/>
<circle cx="348.91" cy="337.69" r="1.2" fill="#c52aa8"/>
<circle cx="349.90" cy="339.77" r="1.2" fill="#c52aa8"/>
<circle cx="350.90" cy="337.69" r="1.2" fill="#c52aa8"/>
<circle cx="351.89" cy="339.77" r="1.2" fill="#c52aa8"/>
<circle cx="352.88" cy="337.69" r="1.2" fill="#c52aa8"/>
<circle cx="353.88" cy="337.69" r="1.2" fill="#c52aa8"/>
<circle cx="354.87" cy="337.69" r="1.2" fill="#c52aa8"/>
<circle cx="355.86" cy="337.69" r="1.2" fill="#c52aa8"/>
<circle cx="356.86" cy="339.77" r="1.2" fill="#c52aa8"/>
<circle cx="357.85" cy="337.69" r="1.2" fill="#c52aa8"/>
<circle cx="358.84" cy="339.77" r="1.2" fill="#c52aa8"/>
<circle cx="359.84" cy="337.69" r="1.2" fill="#c52aa8"/>
<circle cx="360.83" cy="337.69" r="1.2" fill="#c52aa8"/>
<circle cx="361.82" cy="337.69" r="1.2" fill="#c52aa8"/>
<circle cx="362.82" cy="339.77" r="1.2" fill="#c52aa8"/>
<circle cx="363.81" cy="337.69" r="1.2" fill="#c52aa8"/>
<circle cx="364.80" cy="339.77" r="1.2" fill="#c52aa8"/>
<circle cx="365.79" cy="337.69" r="1.2" fill="#c52aa8"/>
<circle cx="366.79" cy="337.69" r="1.2" fill="#c52aa8"/>
<circle cx="367.78" cy="337.69" r="1.2" fill="#c52aa8"/>
<circle cx="368.77" cy="339.77" r="1.2" fill="#c52aa8"/>
<circle cx="369.77" cy="337.69" r="1.2" fill="#c52aa8"/>
<circle cx="370.76" cy="339.77" r="1.2" fill="#c52aa8"/>
<circle cx="371.75" cy="337.69" r="1.2" fill="#c52aa8"/>
<circle cx="372.75" cy="337.69" r="1.2" fill="#c52aa8"/>
<circle cx="373.74" cy="337.69" r="1.2" fill="#c52aa8"/>
<circle cx="374.73" cy="339.77" r="1.2" fill="#c52aa8"/>
<circle cx="375.73" cy="337.69" r="1.2" fill="#c52aa8"/>
<circle cx="376.72" cy="339.77" r="1.2" fill="#c52aa8"/>
<circle cx="377.71" cy="337.69" r="1.2" fill="#c52aa8"/>
<circle cx="378.71" cy="337.69" r="1.2" fill="#c52aa8"/>
<circle cx="379.70" cy="337.69" r="1.2" fill="#c52aa8"/>
<circle cx="380.69" cy="337.69" r="1.2" fill="#c52aa8"/>
<circle cx="381.69" cy="339.77" r="1.2" fill="#c52aa8"/>
<circle cx="382.68" cy="337.69" r="1.2" fill="#c52aa8"/>
<circle cx="383.67" cy="339.77" r="1.2" fill="#c52aa8"/>
<circle cx="384.67" cy="337.69" r="1.2" fill="#c52aa8"/>
<circle cx="385.66" cy="337.69" r="1.2" fill="#c52aa8"/>
<circle cx="386.65" cy="337.69" r="1.2" fill="#c52aa8"/>
<circle cx="387.65" cy="339.77" r="1.2" fill="#c52aa8"/>
<circle cx="388.64" cy="337.69" r="1.2" fill="#c52aa8"/>
<circle cx="389.63" cy="339.77" r="1.2" fill="#c52aa8"/>
<circle cx="390.63" cy="337.69" r="1.2" fill="#c52aa8"/>
<circle cx="391.62" cy="337.69" r="1.2" fill="#c52aa8"/>
<circle cx="392.61" cy="337.69" r="1.2" fill="#c52aa8"/>
<circle cx="393.61" cy="337.69" r="1.2" fill="#c52aa8"/>
<circle cx="394.60" cy="337.69" r="1.2" fill="#c52aa8"/>
<circle cx="395.59" cy="339.77" r="1.2" fill="#c52aa8"/>
<circle cx="396.59" cy="337.69" r="1.2" fill="#c52aa8"/>
<circle cx="397.58" cy="339.77" r="1.2" fill="#c52aa8"/>
<circle cx="398.57" cy="337.69" r="1.2" fill="#c52aa8"/>
<circle cx="399.57" cy="337.69" r="1.2" fill="#c52aa8"/>
<circle cx="400.56" cy="337.69" r="1.2" fill="#c52aa8"/>
<circle cx="401.55" cy="339.77" r="1.2" fill="#c52aa8"/>
<circle cx="402.55" cy="337.69" r="1.2" fill="#c52aa8"/>
<circle cx="403.54" cy="339.77" r="1.2" fill="#c52aa8"/>
<circle cx="404.53" cy="337.69" r="1.2" fill="#c52aa8"/>
<circle cx="405.53" cy="337.69" r="1.2" fill="#c52aa8"/>
<circle cx="406.52" cy="337.69" r="1.2" fill="#c52aa8"/>
<circle cx="407.51" cy="337.69" r="1.2" fill="#c52aa8"/>
<circle cx="408.51" cy="337.69" r="1.2" fill="#c52aa8"/>
<circle cx="409.50" cy="339.77" r="1.2" fill="#c52aa8"/>
<circle cx="410.49" cy="337.69" r="1.2" fill="#c52aa8"/>
<circle cx="411.49" cy="339.77" r="1.2" fill="#c52aa8"/>
<circle cx="412.48" cy="337.69" r="1.2" fill="#c52aa8"/>
<circle cx="413.47" cy="337.69" r="1.2" fill="#c52aa8"/>
<circle cx="414.47" cy="337.69" r="1.2" fill="#c52aa8"/>
<circle cx="415.46" cy="337.69" r="1.2" fill="#c52aa8"/>
<circle cx="416.45" cy="337.69" r="1.2" fill="#c52aa8"/>
<circle cx="417.45" cy="339.77" r="1.2" fill="#c52aa8"/>
<circle cx="418.44" cy="337.69" r="1.2" fill="#c52aa8"/>
<circle cx="419.43" cy="346.02" r="1.2" fill="#c52aa8"/>
<circle cx="420.43" cy="337.69" r="1.2" fill="#c52aa8"/>
<circle cx="421.42" cy="337.69" r="1.2" fill="#c52aa8"/>
<circle cx="422.41" cy="337.69" r="1.2" fill="#c52aa8"/>
<circle cx="423.41" cy="337.69" r="1.2" fill="#c52aa8"/>
<circle cx="424.40" cy="337.69" r="1.2" fill="#c52aa8"/>
<circle cx="425.39" cy="339.77" r="1.2" fill="#c52aa8"/>
<circle cx="426.38" cy="337.69" r="1.2" fill="#c52aa8"/>
<circle cx="427.38" cy="339.77" r="1.2" fill="#c52aa8"/>
<circle cx="428.37" cy="337.69" r="1.2" fill="#c52aa8"/>
<circle cx="429.36" cy="337.69" r="1.2" fill="#c52aa8"/>
<circle cx="430.36" cy="337.69" r="1.2" fill="#c52aa8"/>
<circle cx="431.35" cy="339.77" r="1.2" fill="#c52aa8"/>
<circle cx="432.34" cy="337.69" r="1.2" fill="#c52aa8"/>
<circle cx="433.34" cy="339.77" r="1.2" fill="#c52aa8"/>
<circle cx="434.33" cy="337.69" r="1.2" fill="#c52aa8"/>
<circle cx="435.32" cy="337.69" r="1.2" fill="#c52aa8"/>
<circle cx="436.32" cy="337.69" r="1.2" fill="#c52aa8"/>
<circle cx="437.31" cy="337.69" r="1.2" fill="#c52aa8"/>
<circle cx="438.30" cy="339.77" r="1.2" fill="#c52aa8"/>
<circle cx="439.30" cy="337.69" r="1.2" fill="#c52aa8"/>
<circle cx="440.29" cy="339.77" r="1.2" fill="#c52aa8"/>
<circle cx="441.28" cy="337.69" r="1.2" fill="#c52aa8"/>
<circle cx="442.28" cy="337.69" r="1.2" fill="#c52aa8"/>
<circle cx="443.27" cy="337.69" r="1.2" fill="#c52aa8"/>
<circle cx="444.26" cy="337.69" r="1.2" fill="#c52aa8"/>
<circle cx="446.25" cy="354.35" r="1.2" fill="#c52aa8"/>
<circle cx="447.24" cy="339.77" r="1.2" fill="#c52aa8"/>
<circle cx="448.24" cy="337.69" r="1.2" fill="#c52aa8"/>
<circle cx="449.23" cy="337.69" r="1.2" fill="#c52aa8"/>
<circle cx="450.22" cy="337.69" r="1.2" fill="#c52aa8"/>
<circle cx="451.22" cy="339.77" r="1.2" fill="#c52aa8"/>
<circle cx="452.21" cy="337.69" r="1.2" fill="#c52aa8"/>
<circle cx="453.20" cy="339.77" r="1.2" fill="#c52aa8"/>
<circle cx="454.20" cy="337.69" r="1.2" fill="#c52aa8"/>
<circle cx="455.19" cy="337.69" r="1.2" fill="#c52aa8"/>
<circle cx="456.18" cy="337.69" r="1.2" fill="#c52aa8"/>
<circle cx="457.18" cy="346.02" r="1.2" fill="#c52aa8"/>
<circle cx="458.17" cy="337.69" r="1.2" fill="#c52aa8"/>
<circle cx="459.16" cy="339.77" r="1.2" fill="#c52aa8"/>
<circle cx="460.16" cy="337.69" r="1.2" fill="#c52aa8"/>
<circle cx="461.15" cy="337.69" r="1.2" fill="#c52aa8"/>
<circle cx="462.14" cy="337.69" r="1.2" fill="#c52aa8"/>
<circle cx="463.14" cy="337.69" r="1.2" fill="#c52aa8"/>
<circle cx="464.13" cy="339.77" r="1.2" fill="#c52aa8"/>
<circle cx="465.12" cy="343.94" r="1.2" fill="#c52aa8"/>
<circle cx="466.12" cy="339.77" r="1.2" fill="#c52aa8"/>
<circle cx="467.11" cy="337.69" r="1.2" fill="#c52aa8"/>
<circle cx="468.10" cy="337.69" r="1.2" fill="#c52aa8"/>
<circle cx="469.10" cy="337.69" r="1.2" fill="#c52aa8"/>
<circle cx="470.09" cy="337.69" r="1.2" fill="#c52aa8"/>
<circle cx="471.08" cy="337.69" r="1.2" fill="#c52aa8"/>
<circle cx="472.08" cy="339.77" r="1.2" fill="#c52aa8"/>
<circle cx="473.07" cy="337.69" r="1.2" fill="#c52aa8"/>
<circle cx="474.06" cy="339.77" r="1.2" fill="#c52aa8"/>
<circle cx="475.06" cy="337.69" r="1.2" fill="#c52aa8"/>
<circle cx="476.05" cy="337.69" r="1.2" fill="#c52aa8"/>
<circle cx="477.04" cy="337.69" r="1.2" fill="#c52aa8"/>
<circle cx="478.04" cy="337.69" r="1.2" fill="#c52aa8"/>
<circle cx="479.03" cy="339.77" r="1.2" fill="#c52aa8"/>
<circle cx="480.02" cy="337.69" r="1.2" fill="#c52aa8"/>
<circle cx="481.02" cy="339.77" r="1.2" fill="#c52aa8"/>
<circle cx="482.01" cy="337.69" r="1.2" fill="#c52aa8"/>
<circle cx="483.00" cy="337.69" r="1.2" fill="#c52aa8"/>
<circle cx="483.99" cy="337.69" r="1.2" fill="#c52aa8"/>
<circle cx="484.99" cy="339.77" r="1.2" fill="#c52aa8"/>
<circle cx="485.98" cy="343.94" r="1.2" fill="#c52aa8"/>
<circle cx="486.97" cy="339.77" r="1.2" fill="#c52aa8"/>
<circle cx="487.97" cy="337.69" r="1.2" fill="#c52aa8"/>
<circle cx="488.96" cy="337.69" r="1.2" fill="#c52aa8"/>
<circle cx="489.95" cy="337.69" r="1.2" fill="#c52aa8"/>
<circle cx="490.95" cy="337.69" r="1.2" fill="#c52aa8"/>
<circle cx="491.94" cy="339.77" r="1.2" fill="#c52aa8"/>
<circle cx="492.93" cy="337.69" r="1.2" fill="#c52aa8"/>
<circle cx="493.93" cy="339.77" r="1.2" fill="#c52aa8"/>
<circle cx="494.92" cy="337.69" r="1.2" fill="#c52aa8"/>
<circle cx="495.91" cy="337.69" r="1.2" fill="#c52aa8"/>
<circle cx="496.91" cy="337.69" r="1.2" fill="#c52aa8"/>
<circle cx="497.90" cy="337.69" r="1.2" fill="#c52aa8"/>
<circle cx="498.89" cy="339.77" r="1.2" fill="#c52aa8"/>
<circle cx="499.89" cy="337.69" r="1.2" fill="#c52aa8"/>
<circle cx="500.88" cy="339.77" r="1.2" fill="#c52aa8"/>
<circle cx="501.87" cy="337.69" r="1.2" fill="#c52aa8"/>
<circle cx="502.87" cy="337.69" r="1.2" fill="#c52aa8"/>
<circle cx="503.86" cy="337.69" r="1.2" fill="#c52aa8"/>
<circle cx="504.85" cy="339.77" r="1.2" fill="#c52aa8"/>
<circle cx="505.85" cy="337.69" r="1.2" fill="#c52aa8"/>
<circle cx="506.84" cy="339.77" r="1.2" fill="#c52aa8"/>
<circle cx="507.83" cy="337.69" r="1.2" fill="#c52aa8"/>
<circle cx="508.83" cy="337.69" r="1.2" fill="#c52aa8"/>
<circle cx="509.82" cy="337.69" r="1.2" fill="#c52aa8"/>
<circle cx="510.81" cy="339.77" r="1.2" fill="#c52aa8"/>
<circle cx="511.81" cy="337.69" r="1.2" fill="#c52aa8"/>
<circle cx="512.80" cy="339.77" r="1.2" fill="#c52aa8"/>
<circle cx="513.79" cy="337.69" r="1.2" fill="#c52aa8"/>
<circle cx="514.79" cy="337.69" r="1.2" fill="#c52aa8"/>
<circle cx="515.78" cy="337.69" r="1.2" fill="#c52aa8"/>
<circle cx="516.77" cy="337.69" r="1.2" fill="#c52aa8"/>
<circle cx="517.77" cy="339.77" r="1.2" fill="#c52aa8"/>
<circle cx="518.76" cy="337.69" r="1.2" fill="#c52aa8"/>
<circle cx="519.75" cy="339.77" r="1.2" fill="#c52aa8"/>
<circle cx="520.75" cy="337.69" r="1.2" fill="#c52aa8"/>
<circle cx="521.74" cy="337.69" r="1.2" fill="#c52aa8"/>
<circle cx="522.73" cy="337.69" r="1.2" fill="#c52aa8"/>
<circle cx="523.73" cy="339.77" r="1.2" fill="#c52aa8"/>
<circle cx="524.72" cy="337.69" r="1.2" fill="#c52aa8"/>
<circle cx="525.71" cy="339.77" r="1.2" fill="#c52aa8"/>
<circle cx="526.71" cy="337.69" r="1.2" fill="#c52aa8"/>
<circle cx="527.70" cy="337.69" r="1.2" fill="#c52aa8"/>
<circle cx="528.69" cy="337.69" r="1.2" fill="#c52aa8"/>
<circle cx="529.69" cy="339.77" r="1.2" fill="#c52aa8"/>
<circle cx="530.68" cy="337.69" r="1.2" fill="#c52aa8"/>
<circle cx="531.67" cy="339.77" r="1.2" fill="#c52aa8"/>
<circle cx="532.67" cy="337.69" r="1.2" fill="#c52aa8"/>
<circle cx="533.66" cy="337.69" r="1.2" fill="#c52aa8"/>
<circle cx="534.65" cy="337.69" r="1.2" fill="#c52aa8"/>
<circle cx="535.65" cy="337.69" r="1.2" fill="#c52aa8"/>
<circle cx="536.64" cy="339.77" r="1.2" fill="#c52aa8"/>
<circle cx="537.63" cy="337.69" r="1.2" fill="#c52aa8"/>
<circle cx="538.63" cy="339.77" r="1.2" fill="#c52aa8"/>
<circle cx="539.62" cy="337.69" r="1.2" fill="#c52aa8"/>
<circle cx="540.61" cy="337.69" r="1.2" fill="#c52aa8"/>
<circle cx="541.61" cy="337.69" r="1.2" fill="#c52aa8"/>
<circle cx="542.60" cy="337.69" r="1.2" fill="#c52aa8"/>
<circle cx="543.59" cy="339.77" r="1.2" fill="#c52aa8"/>
<circle cx="544.58" cy="337.69" r="1.2" fill="#c52aa8"/>
<circle cx="545.58" cy="339.77" r="1.2" fill="#c52aa8"/>
<circle cx="546.57" cy="337.69" r="1.2" fill="#c52aa8"/>
<circle cx="547.56" cy="337.69" r="1.2" fill="#c52aa8"/>
<circle cx="548.56" cy="337.69" r="1.2" fill="#c52aa8"/>
<circle cx="549.55" cy="337.69" r="1.2" fill="#c52aa8"/>
<circle cx="550.54" cy="339.77" r="1.2" fill="#c52aa8"/>
<circle cx="551.54" cy="337.69" r="1.2" fill="#c52aa8"/>
<circle cx="552.53" cy="339.77" r="1.2" fill="#c52aa8"/>
<circle cx="553.52" cy="337.69" r="1.2" fill="#c52aa8"/>
<circle cx="554.52" cy="337.69" r="1.2" fill="#c52aa8"/>
<circle cx="555.51" cy="337.69" r="1.2" fill="#c52aa8"/>
<circle cx="556.50" cy="337.69" r="1.2" fill="#c52aa8"/>
<circle cx="557.50" cy="339.77" r="1.2" fill="#c52aa8"/>
<circle cx="558.49" cy="337.69" r="1.2" fill="#c52aa8"/>
<circle cx="559.48" cy="339.77" r="1.2" fill="#c52aa8"/>
<circle cx="560.48" cy="337.69" r="1.2" fill="#c52aa8"/>
<circle cx="561.47" cy="337.69" r="1.2" fill="#c52aa8"/>
<circle cx="562.46" cy="337.69" r="1.2" fill="#c52aa8"/>
<circle cx="563.46" cy="337.69" r="1.2" fill="#c52aa8"/>
<circle cx="564.45" cy="339.77" r="1.2" fill="#c52aa8"/>
<circle cx="565.44" cy="337.69" r="1.2" fill="#c52aa8"/>
<circle cx="566.44" cy="339.77" r="1.2" fill="#c52aa8"/>
<circle cx="567.43" cy="337.69" r="1.2" fill="#c52aa8"/>
<circle cx="568.42" cy="337.69" r="1.2" fill="#c52aa8"/>
<circle cx="569.42" cy="337.69" r="1.2" fill="#c52aa8"/>
<circle cx="570.41" cy="339.77" r="1.2" fill="#c52aa8"/>
<circle cx="571.40" cy="337.69" r="1.2" fill="#c52aa8"/>
<circle cx="572.40" cy="339.77" r="1.2" fill="#c52aa8"/>
<circle cx="573.39" cy="337.69" r="1.2" fill="#c52aa8"/>
<circle cx="574.38" cy="337.69" r="1.2" fill="#c52aa8"/>
<circle cx="575.38" cy="337.69" r="1.2" fill="#c52aa8"/>
<circle cx="576.37" cy="337.69" r="1.2" fill="#c52aa8"/>
<circle cx="577.36" cy="339.77" r="1.2" fill="#c52aa8"/>
<circle cx="578.36" cy="337.69" r="1.2" fill="#c52aa8"/>
<circle cx="579.35" cy="339.77" r="1.2" fill="#c52aa8"/>
<circle cx="580.34" cy="337.69" r="1.2" fill="#c52aa8"/>
<circle cx="581.34" cy="337.69" r="1.2" fill="#c52aa8"/>
<circle cx="582.33" cy="337.69" r="1.2" fill="#c52aa8"/>
<circle cx="583.32" cy="339.77" r="1.2" fill="#c52aa8"/>
<circle cx="584.32" cy="337.69" r="1.2" fill="#c52aa8"/>
<circle cx="585.31" cy="339.77" r="1.2" fill="#c52aa8"/>
<circle cx="586.30" cy="337.69" r="1.2" fill="#c52aa8"/>
<circle cx="587.30" cy="337.69" r="1.2" fill="#c52aa8"/>
<circle cx="588.29" cy="337.69" r="1.2" fill="#c52aa8"/>
<circle cx="589.28" cy="339.77" r="1.2" fill="#c52aa8"/>
<circle cx="590.28" cy="337.69" r="1.2" fill="#c52aa8"/>
<circle cx="591.27" cy="339.77" r="1.2" fill="#c52aa8"/>
<circle cx="592.26" cy="337.69" r="1.2" fill="#c52aa8"/>
<circle cx="593.26" cy="337.69" r="1.2" fill="#c52aa8"/>
<circle cx="594.25" cy="337.69" r="1.2" fill="#c52aa8"/>
<circle cx="595.24" cy="337.69" r="1.2" fill="#c52aa8"/>
<circle cx="596.24" cy="339.77" r="1.2" fill="#c52aa8"/>
<circle cx="597.23" cy="337.69" r="1.2" fill="#c52aa8"/>
<circle cx="598.22" cy="339.77" r="1.2" fill="#c52aa8"/>
<circle cx="599.22" cy="337.69" r="1.2" fill="#c52aa8"/>
<circle cx="600.21" cy="337.69" r="1.2" fill="#c52aa8"/>
<circle cx="601.20" cy="337.69" r="1.2" fill="#c52aa8"/>
<circle cx="602.19" cy="337.69" r="1.2" fill="#c52aa8"/>
<circle cx="603.19" cy="339.77" r="1.2" fill="#c52aa8"/>
<circle cx="604.18" cy="337.69" r="1.2" fill="#c52aa8"/>
<circle cx="605.17" cy="339.77" r="1.2" fill="#c52aa8"/>
<circle cx="606.17" cy="337.69" r="1.2" fill="#c52aa8"/>
<circle cx="607.16" cy="337.69" r="1.2" fill="#c52aa8"/>
<circle cx="608.15" cy="337.69" r="1.2" fill="#c52aa8"/>
<circle cx="609.15" cy="339.77" r="1.2" fill="#c52aa8"/>
<circle cx="610.14" cy="337.69" r="1.2" fill="#c52aa8"/>
<circle cx="611.13" cy="339.77" r="1.2" fill="#c52aa8"/>
<circle cx="612.13" cy="337.69" r="1.2" fill="#c52aa8"/>
<circle cx="613.12" cy="337.69" r="1.2" fill="#c52aa8"/>
<circle cx="614.11" cy="337.69" r="1.2" fill="#c52aa8"/>
<circle cx="615.11" cy="337.69" r="1.2" fill="#c52aa8"/>
<circle cx="616.10" cy="339.77" r="1.2" fill="#c52aa8"/>
<circle cx="617.09" cy="337.69" r="1.2" fill="#c52aa8"/>
<circle cx="618.09" cy="339.77" r="1.2" fill="#c52aa8"/>
<circle cx="619.08" cy="337.69" r="1.2" fill="#c52aa8"/>
<circle cx="620.07" cy="337.69" r="1.2" fill="#c52aa8"/>
<circle cx="621.07" cy="337.69" r="1.2" fill="#c52aa8"/>
<circle cx="622.06" cy="337.69" r="1.2" fill="#c52aa8"/>
<circle cx="623.05" cy="337.69" r="1.2" fill="#c52aa8"/>
<circle cx="624.05" cy="339.77" r="1.2" fill="#c52aa8"/>
<circle cx="625.04" cy="337.69" r="1.2" fill="#c52aa8"/>
<circle cx="626.03" cy="339.77" r="1.2" fill="#c52aa8"/>
<circle cx="627.03" cy="337.69" r="1.2" fill="#c52aa8"/>
<circle cx="628.02" cy="337.69" r="1.2" fill="#c52aa8"/>
<circle cx="629.01" cy="337.69" r="1.2" fill="#c52aa8"/>
<circle cx="630.01" cy="339.77" r="1.2" fill="#c52aa8"/>
<circle cx="631.00" cy="337.69" r="1.2" fill="#c52aa8"/>
<circle cx="89.80" cy="393.90" r="3.6" fill="#f06070" fill-opacity="0.35"/>
<circle cx="89.80" cy="393.90" r="1.6" fill="#e8303a" fill-opacity="0.9"/>
<circle cx="116.20" cy="393.90" r="3.6" fill="#f06070" fill-opacity="0.35"/>
<circle cx="116.20" cy="393.90" r="1.6" fill="#e8303a" fill-opacity="0.9"/>
<circle cx="444.50" cy="393.90" r="3.6" fill="#f06070" fill-opacity="0.35"/>
<circle cx="444.50" cy="393.90" r="1.6" fill="#e8303a" fill-opacity="0.9"/></svg>
<!-- slider -->
<div class="a" style="left:52px;top:481px;width:567px;height:8px;background:#2ea6f3"></div>
<div class="a" style="left:39.6px;top:479.2px;width:12.4px;height:11.4px;background:#f3f3f5;border:0.8px solid #a8a8b0;border-radius:1px"></div>
<div class="a" style="left:619px;top:479.2px;width:12.4px;height:11.4px;background:#f3f3f5;border:0.8px solid #a8a8b0;border-radius:1px"></div>
<svg class="a" style="left:39.6px;top:479.2px" width="12.4" height="11.4"><path d="M4.6 3.8V7.6M6.2 3.8V7.6M7.8 3.8V7.6" stroke="#6a6a80" stroke-width="0.8"/></svg>
<svg class="a" style="left:619px;top:479.2px" width="12.4" height="11.4"><path d="M4.6 3.8V7.6M6.2 3.8V7.6M7.8 3.8V7.6" stroke="#6a6a80" stroke-width="0.8"/></svg>
<!-- legend -->
<svg class="a" style="left:0;top:490px" width="670" height="13">
<line x1="221" y1="9.6" x2="230.3" y2="9.6" stroke="#cc33cc" stroke-width="1"/><circle cx="225.6" cy="9.6" r="1.6" fill="#fff" stroke="#cc33cc" stroke-width="0.9"/>
<line x1="259" y1="9.6" x2="268.5" y2="9.6" stroke="#f5843c" stroke-width="1"/><circle cx="263.7" cy="9.6" r="1.6" fill="#fff" stroke="#f5843c" stroke-width="0.9"/>
<line x1="299.8" y1="9.6" x2="309.7" y2="9.6" stroke="#e8303a" stroke-width="1"/>
<line x1="352" y1="9.6" x2="361.3" y2="9.6" stroke="#4f86e8" stroke-width="1"/>
<line x1="400.6" y1="9.6" x2="411" y2="9.6" stroke="#2ccfe0" stroke-width="1"/>
</svg>
<div class="a lg" style="left:236px">FPS</div>
<div class="a lg" style="left:273.7px">Jank</div>
<div class="a lg" style="left:315.5px">BigJank</div>
<div class="a lg" style="left:367.2px">Stutter</div>
<div class="a lg" style="left:416.3px">InterFrame</div>
</body></html>
